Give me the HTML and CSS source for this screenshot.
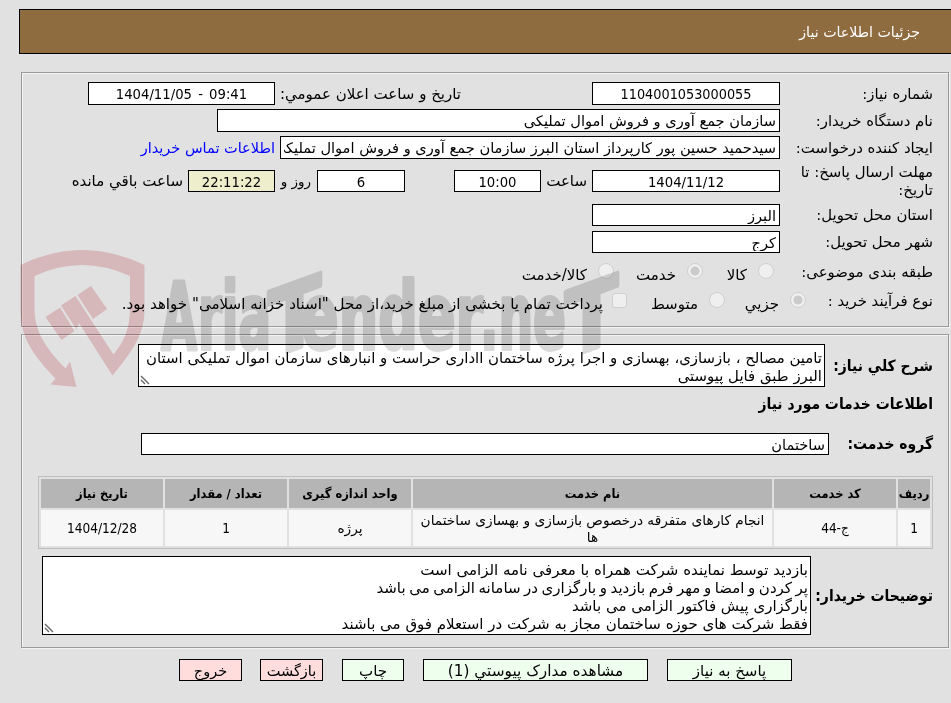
FILE: index.html
```html
<!DOCTYPE html>
<html lang="fa" dir="rtl">
<head>
    <meta charset="utf-8">
    <title>جزئیات اطلاعات نیاز</title>
    <link rel="stylesheet" href="styles.css">
</head>
<body>
    <header>جزئیات اطلاعات نیاز</header>

    <section class="box need">
        <div class="row">
            <span class="label">شماره نیاز:</span>
            <span class="field mid center">1104001053000055</span>
            <span class="announce">تاریخ و ساعت اعلان عمومي:</span>
            <span class="field date center" dir="ltr">1404/11/05 - 09:41</span>
        </div>
        <div class="row">
            <span class="label">نام دستگاه خریدار:</span>
            <span class="field org">سازمان جمع آوری و فروش اموال تملیکی</span>
        </div>
        <div class="row">
            <span class="label">ایجاد کننده درخواست:</span>
            <span class="field creator">سیدحمید حسین پور کارپرداز استان البرز سازمان جمع آوری و فروش اموال تملیکی</span>
            <a class="contact">اطلاعات تماس خریدار</a>
        </div>
        <div class="row deadline">
            <span class="label">مهلت ارسال پاسخ: تا<br>تاریخ:</span>
            <span class="field mid center" dir="ltr">1404/11/12</span>
            <span class="hour">ساعت</span>
            <span class="field time center">10:00</span>
            <span class="field days center">6</span>
            <span class="day">روز و</span>
            <span class="field left-time center">22:11:22</span>
            <span class="remain">ساعت باقي مانده</span>
        </div>
        <div class="row short">
            <span class="label">استان محل تحویل:</span>
            <span class="field mid">البرز</span>
        </div>
        <div class="row short">
            <span class="label">شهر محل تحویل:</span>
            <span class="field mid">کرج</span>
        </div>
        <div class="row options subject">
            <span class="label">طبقه بندی موضوعی:</span>
            <i class="radio"></i><span class="opt">کالا</span>
            <i class="radio on"></i><span class="opt">خدمت</span>
            <i class="radio"></i><span class="opt">کالا/خدمت</span>
        </div>
        <div class="row options process">
            <span class="label">نوع فرآیند خرید :</span>
            <i class="radio on"></i><span class="opt">جزیي</span>
            <i class="radio"></i><span class="opt">متوسط</span>
            <i class="check"></i><span class="opt treasury">پرداخت تمام یا بخشی از مبلغ خرید،از محل "اسناد خزانه اسلامی" خواهد بود.</span>
        </div>
    </section>

    <section class="box services">
        <div class="row desc">
            <span class="title">شرح کلي نیاز:</span>
            <div class="area">تامین مصالح ، بازسازی، بهسازی و اجرا پرژه ساختمان ااداری حراست و انبارهای سازمان اموال تملیکی استان<br>البرز طبق فایل پیوستی
                <svg class="grip" width="10" height="10" viewBox="0 0 10 10"><path d="M1 1L9 9M1 5L5 9"/></svg>
            </div>
        </div>
        <h2>اطلاعات خدمات مورد نیاز</h2>
        <div class="row group">
            <span class="title">گروه خدمت:</span>
            <span class="field">ساختمان</span>
        </div>
        <table>
            <tr>
                <th class="c-row">ردیف</th>
                <th class="c-code">کد خدمت</th>
                <th class="c-name">نام خدمت</th>
                <th class="c-unit">واحد اندازه گیری</th>
                <th class="c-qty">تعداد / مقدار</th>
                <th class="c-date">تاریخ نیاز</th>
            </tr>
            <tr>
                <td>1</td>
                <td>ج-44</td>
                <td class="name">انجام کارهای متفرقه درخصوص بازسازی و بهسازی ساختمان<br>ها</td>
                <td class="name">پرژه</td>
                <td>1</td>
                <td dir="ltr">1404/12/28</td>
            </tr>
        </table>
        <div class="row notes">
            <span class="title">توضیحات خریدار:</span>
            <div class="area">بازدید توسط نماینده شرکت همراه با معرفی نامه الزامی است<br><span class="tight">پر کردن و امضا و مهر فرم بازدید و بارگزاری در سامانه الزامی می باشد</span><br>بارگزاری پیش فاکتور الزامی می باشد<br>فقط شرکت های حوزه ساختمان مجاز به شرکت در استعلام فوق می باشند
                <svg class="grip" width="10" height="10" viewBox="0 0 10 10"><path d="M1 1L9 9M1 5L5 9"/></svg>
            </div>
        </div>
    </section>

    <div class="actions">
        <button class="reply">پاسخ به نیاز</button>
        <button class="docs">مشاهده مدارک پیوستي (1)</button>
        <button class="print">چاپ</button>
        <button class="red">بازگشت</button>
        <button class="red exit">خروج</button>
    </div>

    <svg class="watermark" width="600" height="144" viewBox="20 247 600 144">
        <g class="shield">
            <path d="M20.500 265 Q82 235 144.500 265 V310 C144.500 336 130 354 112.500 375.500 L79 323 L76.500 329.500 L61 305.500 L75.500 296 L91 320 L113.500 354.500 C123 343 130 330 130 308 V276 Q82 254 34.500 276 V308 C34.500 334 48 350 65.500 368.500 L70 361.500 L76.500 387 L50.500 384.500 L55.500 378.500 C36 358 20.500 340 20.500 310 Z"/>
            <path d="M45.500 317 L60 307.500 L74.500 331 L61.500 340 Z M77.500 295 L91 286 L107 309 L93 319 Z"/>
        </g>
        <g class="brand" direction="ltr">
            <text x="161" y="349" textLength="36" lengthAdjust="spacingAndGlyphs">A</text>
            <text x="198" y="349" textLength="73" lengthAdjust="spacingAndGlyphs">ria</text>
            <text x="268" y="349" textLength="53" lengthAdjust="spacingAndGlyphs" transform="translate(268 0) skewY(-20) translate(-268 10)">T</text>
            <text x="301" y="349" textLength="182" lengthAdjust="spacingAndGlyphs">ender</text>
            <text x="480" y="349" textLength="86" lengthAdjust="spacingAndGlyphs">.ne</text>
            <text x="565" y="349" textLength="53" lengthAdjust="spacingAndGlyphs" transform="translate(565 0) skewY(-20) translate(-565 10)">T</text>
        </g>
    </svg>
</body>
</html>
```
FILE: styles.css
```css
* {
    box-sizing: border-box;
}
html {
    background: #e1e1e1;
}
body {
    position: relative;
    margin: 0;
    padding-top: 9px;
    height: 703px;
    overflow: hidden;
    background: #e1e1e1;
    font-family: "DejaVu Sans", sans-serif;
    font-size: 15px;
    line-height: 18px;
    color: #000;
}
header {
    height: 45px;
    margin: 0 -2px 18px 19px;
    padding: 0 32px 0 0;
    border: 1px solid #000;
    background: #8f6c40;
    color: #fff;
    font-size: 14.2px;
    line-height: 45px;
}
.watermark {
    position: absolute;
    left: 20px;
    top: 247px;
    mix-blend-mode: multiply;
    pointer-events: none;
}
.shield {
    fill: #f3d0d3;
}
.brand {
    fill: #dadada;
    stroke: #dadada;
    stroke-width: 4;
    stroke-linejoin: round;
    font: bold 92px "DejaVu Sans", sans-serif;
}
.box {
    width: 928px;
    margin-right: 2px;
    border: 1px solid #9a9a9a;
    box-shadow: inset 1px 1px 0 #f4f4f4, 1px 1px 0 #f4f4f4;
    padding: 9px 15px 0 0;
}
.need {
    height: 255px;
    margin-bottom: 7px;
}
.services {
    height: 314px;
}
.row {
    display: flex;
    align-items: center;
    height: 23px;
    margin-bottom: 4px;
    white-space: nowrap;
}
.label {
    flex: 0 0 153px;
    font-size: 14.9px;
}
.field {
    flex: none;
    height: 23px;
    padding: 1px 3px;
    border: 1px solid #000;
    background: #fff;
    font-size: 14.6px;
    line-height: 20px;
    overflow: clip;
    overflow-clip-margin: content-box;
}
.short .field, .deadline .field, .group .field {
    height: 22px;
    line-height: 19px;
}
.center {
    text-align: center;
    font-family: "DejaVu Sans Condensed", "DejaVu Sans", sans-serif;
    font-size: 14.3px;
}
.mid {
    width: 188px;
}
.date {
    width: 187px;
    word-spacing: 2px;
    font-size: 14.7px;
}
.announce {
    width: 186px;
    margin-right: 131px;
}
.org {
    width: 563px;
}
.creator {
    width: 500px;
}
.contact {
    margin-right: 5px;
    color: #00f;
    font-size: 14.5px;
}
.deadline {
    height: 36px;
    margin-bottom: 5px;
}
.deadline .center {
    font-size: 14.7px;
}
.hour {
    width: 46px;
    margin-right: 5px;
}
.time {
    width: 87px;
}
.days {
    width: 88px;
    margin-right: 49px;
}
.day {
    width: 36px;
    margin-right: 6px;
    font-size: 13.5px;
}
.left-time {
    width: 87px;
    background: #eeeecc;
}
.remain {
    margin-right: 5px;
}
.short {
    height: 22px;
    margin-bottom: 5px;
}
.options {
    height: 28px;
    margin-bottom: 1px;
}
.radio, .check {
    flex: none;
    width: 16px;
    height: 16px;
    margin-top: -2px;
    border: 1px solid #cfcfcf;
    border-radius: 50%;
    background: #efefef;
}
.radio.on {
    background: radial-gradient(circle, #cbcbcb 4.2px, #efefef 4.8px);
}
.check {
    width: 15px;
    height: 15px;
    border-radius: 3px;
}
.opt {
    padding-top: 5px;
    margin-right: 11px;
}
.subject .label {
    flex-basis: 159px;
}
.subject .opt:nth-of-type(2) {
    width: 44px;
}
.subject .opt:nth-of-type(3) {
    width: 62px;
}
.process .label {
    flex-basis: 127px;
}
.process .opt:nth-of-type(2) {
    width: 54px;
}
.process .opt:nth-of-type(3) {
    width: 71px;
}
.process .treasury {
    margin-right: 9px;
    font-size: 15.1px;
}
.title, h2 {
    font-family: "DejaVu Sans Condensed", "DejaVu Sans", sans-serif;
    font-size: 15.5px;
    font-weight: bold;
}
.title {
    flex: none;
}
.desc {
    height: 43px;
    margin-bottom: 8px;
}
.area {
    position: relative;
    padding: 4px 2px 0 0;
    border: 1px solid #000;
    background: #fff;
}
.desc .title {
    width: 108px;
}
.desc .area {
    width: 687px;
    height: 43px;
    font-size: 14.9px;
}
.grip {
    position: absolute;
    left: 1px;
    bottom: 1px;
    fill: none;
    stroke: #666;
    stroke-width: 1.4;
}
h2 {
    margin: 0 0 20px;
    line-height: 18px;
}
.group {
    height: 22px;
    margin-bottom: 21px;
}
.group .title {
    width: 104px;
}
.group .field {
    width: 688px;
}
table {
    width: 895px;
    height: 73px;
    table-layout: fixed;
    border: 1px solid #bdbdbd;
    border-spacing: 2px;
    border-collapse: separate;
    font-family: "DejaVu Sans Condensed", "DejaVu Sans", sans-serif;
    font-size: 13.5px;
    line-height: 17px;
    text-align: center;
    margin-bottom: 7px;
}
th {
    height: 29px;
    padding: 0;
    background: #b5b5b5;
    font-size: 12.8px;
}
td {
    padding: 1px 0 0;
    background: #f7f7f7;
}
.name {
    font-family: "DejaVu Sans", sans-serif;
    font-size: 13.7px;
    white-space: nowrap;
}
.c-row {
    width: 32px;
}
.c-code {
    width: 122px;
}
.c-name {
    width: 359px;
}
.c-unit, .c-qty {
    width: 122px;
}
.notes {
    height: 79px;
}
.notes .title {
    width: 122px;
}
.notes .area {
    width: 769px;
    height: 79px;
}
.tight {
    word-spacing: -1.2px;
}
.actions {
    display: flex;
    padding: 11px 159px 0 0;
    gap: 19px;
}
button {
    height: 22px;
    padding: 1px 0 0;
    border: 1px solid #000;
    background: #eeffee;
    color: #000;
    font: inherit;
    line-height: 18px;
    white-space: nowrap;
}
.reply {
    width: 125px;
}
.docs {
    width: 225px;
    font-size: 15.3px;
}
.print {
    width: 62px;
}
.red {
    width: 63px;
    background: #ffdddd;
    font-size: 14.5px;
}
.exit {
    margin-right: -1px;
}
```
